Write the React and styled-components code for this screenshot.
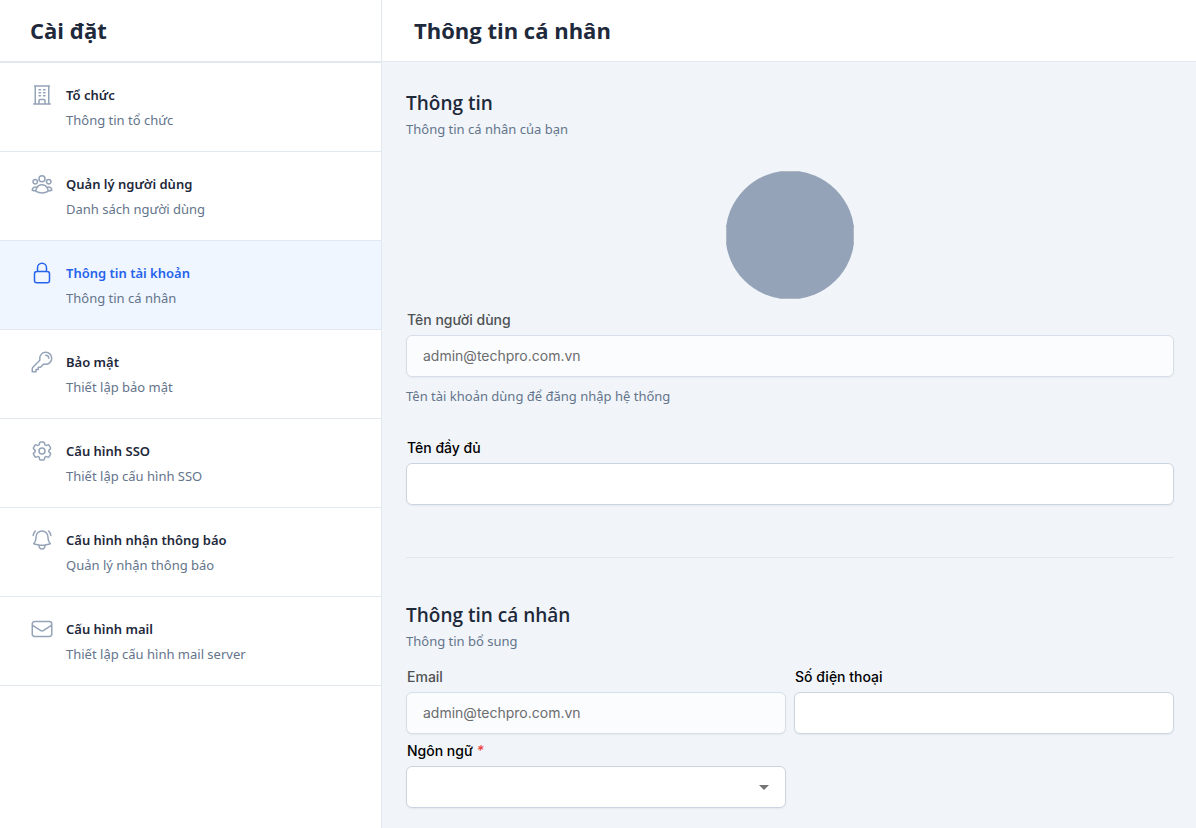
import React from "react";
import styled, { createGlobalStyle, css } from "styled-components";
import {
  HiOutlineBuildingOffice,
  HiOutlineUserGroup,
  HiOutlineLockClosed,
  HiOutlineKey,
  HiOutlineCog6Tooth,
  HiOutlineBellAlert,
  HiOutlineEnvelope,
} from "react-icons/hi2";

const GlobalStyle = createGlobalStyle`
  *, *::before, *::after { box-sizing: border-box; }
  body {
    margin: 0;
    background: #fff;
    color: #1e293b;
    font-family: "Segoe UI", "Noto Sans", "Open Sans", sans-serif;
    font-size: 13px;
  }
`;

const Page = styled.div`
  display: flex;
  min-height: 100vh;
`;

const Sidebar = styled.aside`
  flex: 0 0 382px;
  border-right: 1px solid #e2e8f0;
  background: #fff;
`;

const SidebarHeader = styled.header`
  padding: 14px 30px 15px;
  border-bottom: 2px solid #e2e8f0;
`;

const Title = styled.h1`
  margin: 0;
  font-family: "Segoe UI", "Open Sans", "Noto Sans", sans-serif;
  font-size: 22px;
  line-height: 32px;
  font-weight: 700;
`;

const MenuLink = styled.a`
  display: flex;
  gap: 12px;
  padding: 20px 30px;
  border-bottom: 1px solid #e2e8f0;
  text-decoration: none;
  color: #1e293b;
  background: ${(p) => (p.$active ? "#eff6ff" : "transparent")};

  svg {
    flex: none;
    width: 24px;
    height: 24px;
    color: ${(p) => (p.$active ? "#2563eb" : "#94a3b8")};
  }
`;

const MenuTitle = styled.div`
  line-height: 24px;
  font-weight: 600;
  color: ${(p) => (p.$active ? "#2563eb" : "#1e293b")};
`;

const MenuText = styled.div`
  margin-top: 2px;
  line-height: 22px;
  color: #64748b;
`;

const Main = styled.main`
  flex: 1;
  min-width: 0;
  background: #f1f5f9;
`;

const MainHeader = styled.header`
  padding: 14px 32px 15px;
  border-bottom: 1px solid #e2e8f0;
  background: #fff;
`;

const Form = styled.form`
  padding: 25px 22px 20px 24px;
`;

const SectionTitle = styled.h2`
  margin: 0;
  font-family: "Segoe UI", "Open Sans", "Noto Sans", sans-serif;
  font-size: 19px;
  line-height: 32px;
  font-weight: 600;
`;

const Note = styled.p`
  margin: 0;
  line-height: 20px;
  color: #64748b;
`;

const Avatar = styled.svg`
  display: block;
  width: 128px;
  height: 128px;
  margin: 32px auto 10px;
`;

const Field = styled.div`
  display: flex;
  flex-direction: column;
`;

const Label = styled.label`
  margin-bottom: 4px;
  padding-left: 1px;
  line-height: 22px;
  font-family: Inter, sans-serif;
  font-size: 14px;
  font-weight: 500;
  color: ${(p) => (p.$muted ? "#4f5154" : "#000")};
`;

const Required = styled.span`
  font-style: italic;
  color: #ef4444;
`;

const control = css`
  width: 100%;
  height: 42px;
  padding: 0 16px 2px;
  border: 1px solid #cbd5e1;
  border-radius: 6px;
  background: #fff;
  box-shadow: 0 1px 2px rgba(0, 0, 0, 0.05);
  font-family: Inter, sans-serif;
  font-size: 14px;
  color: #000;
`;

const Input = styled.input`
  ${control}
  &:disabled {
    border-color: #d6dfe9;
    background: #fbfcfe;
    color: #6b6c6e;
  }
`;

const SelectBox = styled.div`
  display: grid;
  align-items: center;

  > * {
    grid-area: 1 / 1;
  }
  svg {
    justify-self: end;
    margin-right: 17px;
    pointer-events: none;
  }
`;

const Select = styled.select`
  ${control}
  appearance: none;
`;

const Hint = styled(Note)`
  margin: 9px 0 31px;
`;

const Divider = styled.hr`
  margin: 52px 0 41px;
  border: 0;
  border-top: 1px solid #e2e8f0;
`;

const Grid = styled.div`
  display: grid;
  grid-template-columns: 1fr 1fr;
  gap: 6px 8px;
  margin-top: 15px;
`;

const items = [
  { icon: HiOutlineBuildingOffice, title: "Tổ chức", text: "Thông tin tổ chức" },
  { icon: HiOutlineUserGroup, title: "Quản lý người dùng", text: "Danh sách người dùng" },
  { icon: HiOutlineLockClosed, title: "Thông tin tài khoản", text: "Thông tin cá nhân", active: true },
  { icon: HiOutlineKey, title: "Bảo mật", text: "Thiết lập bảo mật" },
  { icon: HiOutlineCog6Tooth, title: "Cấu hình SSO", text: "Thiết lập cấu hình SSO" },
  { icon: HiOutlineBellAlert, title: "Cấu hình nhận thông báo", text: "Quản lý nhận thông báo" },
  { icon: HiOutlineEnvelope, title: "Cấu hình mail", text: "Thiết lập cấu hình mail server" },
];

export default function App() {
  return (
    <>
      <GlobalStyle />
      <Page>
        <Sidebar>
          <SidebarHeader>
            <Title>Cài đặt</Title>
          </SidebarHeader>
          <nav>
            {items.map(({ icon: Icon, title, text, active }) => (
              <MenuLink key={title} href="#" $active={active} aria-current={active ? "page" : undefined}>
                <Icon aria-hidden="true" />
                <div>
                  <MenuTitle $active={active}>{title}</MenuTitle>
                  <MenuText>{text}</MenuText>
                </div>
              </MenuLink>
            ))}
          </nav>
        </Sidebar>
        <Main>
          <MainHeader>
            <Title as="h2">Thông tin cá nhân</Title>
          </MainHeader>
          <Form>
            <SectionTitle>Thông tin</SectionTitle>
            <Note>Thông tin cá nhân của bạn</Note>
            <Avatar viewBox="0 0 128 128" aria-hidden="true">
              <circle cx="64" cy="64" r="64.5" fill="#94a3b8" />
              <path d="M56 .5h16M56 127.5h16M.5 56v16M127.5 56v16" stroke="#b0b7c0" />
            </Avatar>
            <Field>
              <Label htmlFor="username" $muted>Tên người dùng</Label>
              <Input id="username" defaultValue="admin@techpro.com.vn" disabled />
            </Field>
            <Hint>Tên tài khoản dùng để đăng nhập hệ thống</Hint>
            <Field>
              <Label htmlFor="fullname">Tên đầy đủ</Label>
              <Input id="fullname" />
            </Field>
            <Divider />
            <SectionTitle>Thông tin cá nhân</SectionTitle>
            <Note>Thông tin bổ sung</Note>
            <Grid>
              <Field>
                <Label htmlFor="email" $muted>Email</Label>
                <Input id="email" type="email" defaultValue="admin@techpro.com.vn" disabled />
              </Field>
              <Field>
                <Label htmlFor="phone">Số điện thoại</Label>
                <Input id="phone" type="tel" />
              </Field>
              <Field>
                <Label htmlFor="language">
                  Ngôn ngữ <Required>*</Required>
                </Label>
                <SelectBox>
                  <Select id="language" required defaultValue="">
                    <option value="" />
                  </Select>
                  <svg width="10" height="5" viewBox="0 0 10 5" aria-hidden="true">
                    <path d="M0 0h10L5 5z" fill="#757575" />
                  </svg>
                </SelectBox>
              </Field>
            </Grid>
          </Form>
        </Main>
      </Page>
    </>
  );
}
